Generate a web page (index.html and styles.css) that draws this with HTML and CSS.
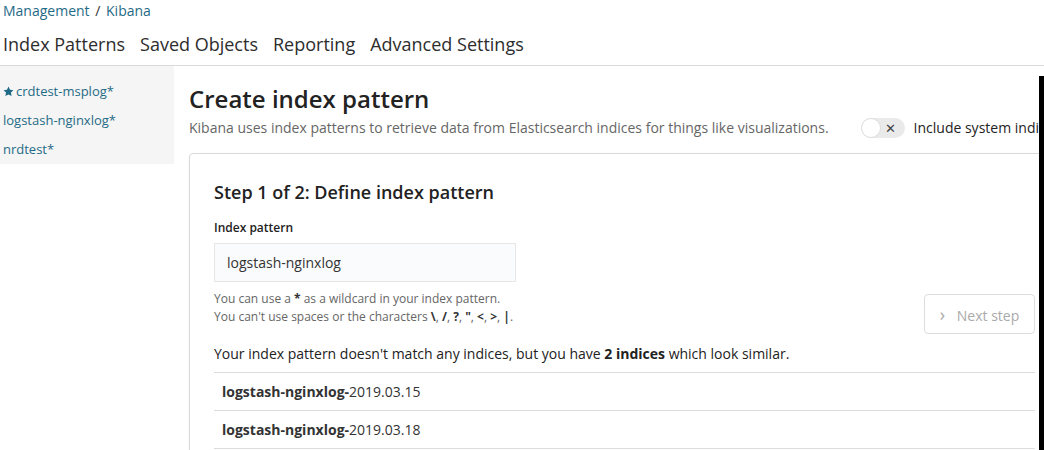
FILE: index.html
```html
<!DOCTYPE html>
<html lang="en">
<head>
<meta charset="UTF-8">
<meta name="viewport" content="width=device-width, initial-scale=1.0">
<title>Kibana - Create index pattern</title>
<link rel="stylesheet" href="styles.css">
</head>
<body>
<div class="top">
    <div class="crumbs"><a href="#">Management</a> <span class="sep">/</span> <a href="#">Kibana</a></div>
    <nav class="tabs">
        <a href="#">Index Patterns</a>
        <a href="#">Saved Objects</a>
        <a href="#">Reporting</a>
        <a href="#">Advanced Settings</a>
    </nav>
</div>

<div class="layout">
    <ul class="sidebar">
        <li><svg class="star" viewBox="0 0 16 16" width="11" height="11"><path d="M8 .8l2.2 4.6 5 .7-3.6 3.5.9 5L8 12.2l-4.5 2.4.9-5L.8 6.1l5-.7z" fill="#1f6b86"/></svg><a href="#">crdtest-msplog*</a></li>
        <li><a href="#">logstash-nginxlog*</a></li>
        <li><a href="#">nrdtest*</a></li>
    </ul>

    <div class="content">
        <div class="page-head">
            <div>
                <h1>Create index pattern</h1>
                <p class="subtitle">Kibana uses index patterns to retrieve data from Elasticsearch indices for things like visualizations.</p>
            </div>
            <label class="switch">
                <span class="track"><span class="knob"></span><span class="cross">&#x2715;</span></span>
                Include system indices
            </label>
        </div>

        <div class="panel">
            <h2>Step 1 of 2: Define index pattern</h2>
            <div class="form-row">
                <div class="field">
                    <label for="pattern">Index pattern</label>
                    <input type="text" id="pattern" value="logstash-nginxlog">
                    <p class="help">You can use a <b>*</b> as a wildcard in your index pattern.<br>
                    You can't use spaces or the characters <b>\</b>, <b>/</b>, <b>?</b>, <b>"</b>, <b>&lt;</b>, <b>&gt;</b>, <b>|</b>.</p>
                </div>
                <button type="button" class="next" disabled><span class="chev">&#x203A;</span> Next step</button>
            </div>

            <p class="match">Your index pattern doesn't match any indices, but you have <b>2 indices</b> which look similar.</p>
            <ul class="indices">
                <li><b>logstash-nginxlog-</b>2019.03.15</li>
                <li><b>logstash-nginxlog-</b>2019.03.18</li>
            </ul>
        </div>
    </div>
</div>

<div class="edge"></div>
</body>
</html>
```

FILE: styles.css
```css
body {
    margin: 0;
    font-family: "Open Sans", "Liberation Sans", sans-serif;
    color: #2d2d2d;
    background: #fff;
    overflow: hidden;
    width: 1044px;
    height: 450px;
}

a {
    text-decoration: none;
}

.top {
    border-bottom: 1px solid #d9d9d9;
    padding: 1px 0 0 3px;
    height: 66px;
    box-sizing: border-box;
}

.crumbs {
    font-size: 14px;
    line-height: 20px;
    color: #1f6b86;
}

.crumbs a {
    color: #1f6b86;
}

.crumbs .sep {
    margin: 0 2px;
    color: #333;
}

.tabs {
    display: flex;
    gap: 15px;
    margin-top: 3px;
    font-size: 18px;
    line-height: 40px;
}

.tabs a {
    color: #2d2d2d;
}

.layout {
    display: flex;
    align-items: flex-start;
}

.sidebar {
    list-style: none;
    margin: 0;
    padding: 11px 0 0 3px;
    width: 171px;
    flex: none;
    background: #f5f5f5;
    font-size: 13px;
    line-height: 29px;
}

.sidebar li {
    display: flex;
    align-items: center;
}

.sidebar a {
    color: #1f6b86;
}

.star {
    margin-right: 2px;
}

.content {
    flex: none;
    width: 890px;
    padding: 18px 0 0 15px;
}

.page-head {
    display: flex;
    align-items: flex-end;
    gap: 32px;
}

h1 {
    margin: 0;
    font-size: 24px;
    font-weight: 600;
    line-height: 30px;
    color: #222;
}

.subtitle {
    margin: 4px 0 0;
    font-size: 14px;
    line-height: 20px;
    color: #666;
}

.switch {
    display: flex;
    align-items: center;
    gap: 9px;
    font-size: 14px;
    line-height: 20px;
    color: #222;
    white-space: nowrap;
}

.track {
    position: relative;
    width: 44px;
    height: 20px;
    border-radius: 10px;
    background: #eaeaea;
    display: flex;
    align-items: center;
    justify-content: flex-end;
}

.knob {
    position: absolute;
    left: 0;
    top: 0;
    width: 18px;
    height: 18px;
    border: 1px solid #ddd;
    border-radius: 50%;
    background: #fff;
}

.cross {
    font-size: 13px;
    color: #444;
    margin-right: 9px;
}

.panel {
    margin-top: 15px;
    border: 1px solid #d9d9d9;
    border-radius: 4px;
    padding: 24px;
    width: 821px;
    box-shadow: 0 1px 3px rgba(0, 0, 0, 0.05);
}

h2 {
    margin: 0;
    font-size: 18px;
    font-weight: 600;
    line-height: 28px;
    color: #222;
}

.form-row {
    display: flex;
    justify-content: space-between;
    align-items: flex-end;
}

.field {
    padding-bottom: 8px;
}

.field label {
    display: block;
    margin-top: 12px;
    font-size: 12px;
    font-weight: 600;
    line-height: 20px;
    color: #222;
}

.field input {
    display: block;
    margin-top: 5px;
    width: 302px;
    height: 39px;
    box-sizing: border-box;
    padding: 0 12px;
    border: 1px solid #e6e6e6;
    background: #fafbfd;
    font-family: inherit;
    font-size: 14px;
    color: #333;
}

.help {
    margin: 8px 0 0;
    font-size: 12px;
    line-height: 18px;
    color: #666;
}

.help b {
    color: #333;
}

.next {
    width: 111px;
    height: 40px;
    border: 1px solid #ddd;
    border-radius: 4px;
    background: #fff;
    font-family: inherit;
    font-size: 14px;
    color: #aaa;
}

.chev {
    font-size: 18px;
    margin-right: 8px;
}

.match {
    margin: 10px 0 0;
    font-size: 14px;
    line-height: 20px;
    color: #222;
}

.indices {
    list-style: none;
    margin: 8px 0 0;
    padding: 0;
    border-top: 1px solid #ddd;
}

.indices li {
    padding: 0 8px;
    font-size: 14px;
    line-height: 37px;
    border-bottom: 1px solid #ddd;
    color: #333;
}

.edge {
    position: fixed;
    top: 76px;
    right: 0;
    width: 5px;
    height: 374px;
    background: #000;
}
```
